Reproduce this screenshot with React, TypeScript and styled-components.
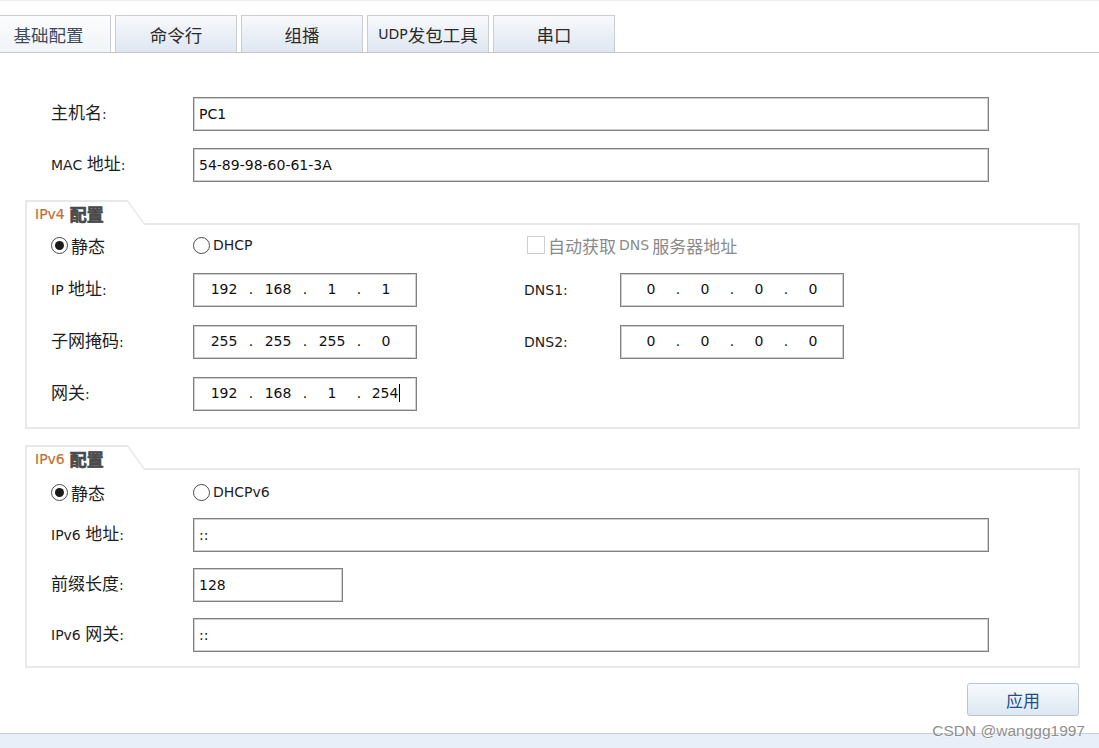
import React from 'react';
import styled, { createGlobalStyle } from 'styled-components';

const GlobalStyle = createGlobalStyle`
  html, body {
    margin: 0;
    padding: 0;
    background: #fff;
  }
  body {
    font-family: "Noto Sans CJK SC", sans-serif;
    font-size: 17px;
    color: #222;
  }
  * {
    box-sizing: border-box;
  }
`;

const Page = styled.div`
  position: relative;
  width: 1099px;
  height: 748px;
  display: flex;
  flex-direction: column;
  border-top: 1px solid #ececec;
  overflow: hidden;
`;

const En = styled.span`
  font-family: "DejaVu Sans", sans-serif;
  font-size: 14px;
`;

// wraps ascii runs in the latin font, the rest stays in the CJK font
const Txt: React.FC<{ s: string }> = ({ s }) => (
  <>
    {s.split(/([\x20-\x7E]+)/).filter(Boolean).map((part, i) =>
      /^[\x20-\x7E]+$/.test(part) ? <En key={i}>{part}</En> : <span key={i}>{part}</span>
    )}
  </>
);

const TabBar = styled.div`
  display: flex;
  gap: 4px;
  height: 52px;
  padding-top: 14px;
  border-bottom: 1px solid #c4c4c4;
`;

const Tab = styled.div<{ $active?: boolean; $w: number }>`
  width: ${({ $w }) => $w}px;
  margin-left: ${({ $active }) => ($active ? '-14px' : '0')};
  display: flex;
  align-items: center;
  justify-content: center;
  border: 1px solid #c9ced6;
  border-bottom: none;
  background: ${({ $active }) =>
    $active
      ? 'linear-gradient(#fbfcfd, #f1f4f8)'
      : 'linear-gradient(#f7f9fc, #dfe7f1)'};
  color: ${({ $active }) => ($active ? '#3d4a5a' : '#2a2a2a')};
  font-size: 17.5px;
`;

const Main = styled.div`
  padding: 0 19px 0 25px;
  display: flex;
  flex-direction: column;
`;

const TopForm = styled.div`
  margin-top: 44px;
  padding-left: 26px;
  display: grid;
  grid-template-columns: 142px 796px;
  grid-auto-rows: 34px;
  row-gap: 17px;
  align-items: center;
`;

const Label = styled.div`
  color: #1e1e1e;
  white-space: nowrap;
  line-height: 20px;
  margin-top: -3px;
`;

const TextBox = styled.input<{ $w?: number }>`
  width: ${({ $w }) => ($w ? `${$w}px` : '100%')};
  height: 34px;
  padding: 0 5px;
  border: 1px solid #808080;
  box-shadow: inset 0 0 0 1px #d0d0d0;
  outline: none;
  font-family: "DejaVu Sans", sans-serif;
  font-size: 14px;
  color: #111;
  background: #fff;
  justify-self: start;
`;

const Group = styled.section<{ $mt: number }>`
  margin-top: ${({ $mt }) => $mt}px;
  display: flex;
  flex-direction: column;
`;

const GroupHead = styled.div`
  display: flex;
  height: 25px;
`;

const Legend = styled.div`
  width: 102px;
  padding-left: 8px;
  display: flex;
  align-items: center;
  gap: 5px;
  border-top: 2px solid #e8e8e8;
  border-left: 2px solid #e8e8e8;
`;

const LegendEn = styled.span`
  font-family: "DejaVu Sans", sans-serif;
  font-size: 14px;
  color: #c2702f;
  -webkit-text-stroke: 0.2px #c2702f;
`;

const LegendHan = styled.span`
  font-size: 17px;
  font-weight: 700;
  color: #4a4a4a;
  -webkit-text-stroke: 0.7px #4a4a4a;
`;

const Slant = styled.div`
  width: 18px;
  background: linear-gradient(
    to top right,
    transparent calc(50% - 1.2px),
    #e4e4e4 50%,
    transparent calc(50% + 1.2px)
  );
`;

const HeadFill = styled.div`
  flex: 1;
  border-bottom: 2px solid #e8e8e8;
`;

const GroupBox = styled.div<{ $pt: number; $pb: number }>`
  border: 2px solid #e8e8e8;
  border-top: none;
  padding: ${({ $pt, $pb }) => `${$pt}px 0 ${$pb}px 24px`};
`;

const FormGrid = styled.div<{ $cols: string; $gap: number }>`
  display: grid;
  grid-template-columns: ${({ $cols }) => $cols};
  grid-template-rows: 20px;
  grid-auto-rows: 34px;
  row-gap: ${({ $gap }) => $gap}px;
  align-items: center;
`;

const Choice = styled.label`
  display: flex;
  align-items: center;
  gap: 3px;
  color: #1e1e1e;
  white-space: nowrap;
`;

const RadioDot = styled.span<{ $on?: boolean }>`
  width: 17px;
  height: 17px;
  border-radius: 50%;
  border: 1px solid #4a4a4a;
  background: #fff;
  display: inline-flex;
  align-items: center;
  justify-content: center;

  &::after {
    content: '';
    width: 9px;
    height: 9px;
    border-radius: 50%;
    background: ${({ $on }) => ($on ? '#1a1a1a' : 'transparent')};
  }
`;

const CheckBox = styled.span`
  width: 18px;
  height: 18px;
  margin-left: 3px;
  border: 1px solid #cfcfcf;
  background: #fff;
`;

const MutedChoice = styled(Choice)`
  color: #8a8a8a;
  grid-column: 4 / span 2;
`;

const IpBox = styled.div`
  width: 224px;
  height: 34px;
  border: 1px solid #808080;
  box-shadow: inset 0 0 0 1px #d0d0d0;
  padding-left: 10px;
  padding-bottom: 3px;
  display: grid;
  grid-template-columns: 40px 14px 40px 14px 40px 14px 40px;
  align-items: center;
  font-family: "DejaVu Sans", sans-serif;
  font-size: 14px;
  color: #111;
`;

const Octet = styled.span`
  text-align: center;
  white-space: nowrap;
`;

const Dot = styled.span`
  text-align: center;
`;

const Caret = styled.span`
  display: inline-block;
  width: 1px;
  height: 18px;
  margin-left: 1px;
  vertical-align: -4px;
  background: #000;
`;

const Actions = styled.div`
  margin-top: 15px;
  display: flex;
  justify-content: flex-end;
  padding-right: 1px;
`;

const ApplyButton = styled.button`
  width: 112px;
  height: 33px;
  border: 1px solid #b9c5d2;
  border-radius: 3px;
  background: linear-gradient(#f7fafd, #dde7f1);
  color: #1f4f8f;
  font-family: "Noto Sans CJK SC", sans-serif;
  font-size: 17px;
  cursor: pointer;
`;

const BottomBar = styled.div`
  margin-top: auto;
  height: 15px;
  background: #e9eff9;
  border-top: 1px solid #c6ced9;
`;

const Watermark = styled.div`
  position: absolute;
  right: 14px;
  bottom: 10px;
  font-family: "Liberation Sans", sans-serif;
  font-size: 15.5px;
  line-height: 1;
  color: #8e8e8e;
  text-shadow: 0 0 2px #fff, 0 0 2px #fff;
`;

const tabs = [
  { name: '基础配置', w: 125, active: true },
  { name: '命令行', w: 122 },
  { name: '组播', w: 122 },
  { name: 'UDP发包工具', w: 122 },
  { name: '串口', w: 122 },
];

const IpField: React.FC<{ ip: string; caret?: boolean }> = ({ ip, caret }) => {
  const parts = ip.split('.');
  return (
    <IpBox>
      {parts.map((p, i) => (
        <React.Fragment key={i}>
          {i > 0 && <Dot>.</Dot>}
          <Octet>
            {p}
            {caret && i === parts.length - 1 && <Caret />}
          </Octet>
        </React.Fragment>
      ))}
    </IpBox>
  );
};

const GroupHeader: React.FC<{ en: string }> = ({ en }) => (
  <GroupHead>
    <Legend>
      <LegendEn>{en}</LegendEn>
      <LegendHan>配置</LegendHan>
    </Legend>
    <Slant />
    <HeadFill />
  </GroupHead>
);

const App: React.FC = () => (
  <Page>
    <GlobalStyle />
    <TabBar>
      {tabs.map(t => (
        <Tab key={t.name} $w={t.w} $active={t.active}>
          <Txt s={t.name} />
        </Tab>
      ))}
    </TabBar>

    <Main>
      <TopForm>
        <Label><Txt s="主机名:" /></Label>
        <TextBox value="PC1" readOnly />
        <Label><Txt s="MAC 地址:" /></Label>
        <TextBox value="54-89-98-60-61-3A" readOnly />
      </TopForm>

      <Group $mt={18}>
        <GroupHeader en="IPv4" />
        <GroupBox $pt={10} $pb={16}>
          <FormGrid $cols="142px 224px 107px 96px 224px" $gap={18}>
            <Choice><RadioDot $on />静态</Choice>
            <Choice><RadioDot /><En>DHCP</En></Choice>
            <div />
            <MutedChoice><CheckBox /><Txt s="自动获取 DNS 服务器地址" /></MutedChoice>

            <Label><Txt s="IP 地址:" /></Label>
            <IpField ip="192.168.1.1" />
            <div />
            <Label><En>DNS1:</En></Label>
            <IpField ip="0.0.0.0" />

            <Label><Txt s="子网掩码:" /></Label>
            <IpField ip="255.255.255.0" />
            <div />
            <Label><En>DNS2:</En></Label>
            <IpField ip="0.0.0.0" />

            <Label><Txt s="网关:" /></Label>
            <IpField ip="192.168.1.254" caret />
          </FormGrid>
        </GroupBox>
      </Group>

      <Group $mt={16}>
        <GroupHeader en="IPv6" />
        <GroupBox $pt={12} $pb={14}>
          <FormGrid $cols="142px 796px" $gap={16}>
            <Choice><RadioDot $on />静态</Choice>
            <Choice><RadioDot /><En>DHCPv6</En></Choice>

            <Label><Txt s="IPv6 地址:" /></Label>
            <TextBox value="::" readOnly />

            <Label><Txt s="前缀长度:" /></Label>
            <TextBox $w={150} value="128" readOnly />

            <Label><Txt s="IPv6 网关:" /></Label>
            <TextBox value="::" readOnly />
          </FormGrid>
        </GroupBox>
      </Group>

      <Actions>
        <ApplyButton>应用</ApplyButton>
      </Actions>
    </Main>

    <BottomBar />
    <Watermark>CSDN @wanggg1997</Watermark>
  </Page>
);

export default App;
